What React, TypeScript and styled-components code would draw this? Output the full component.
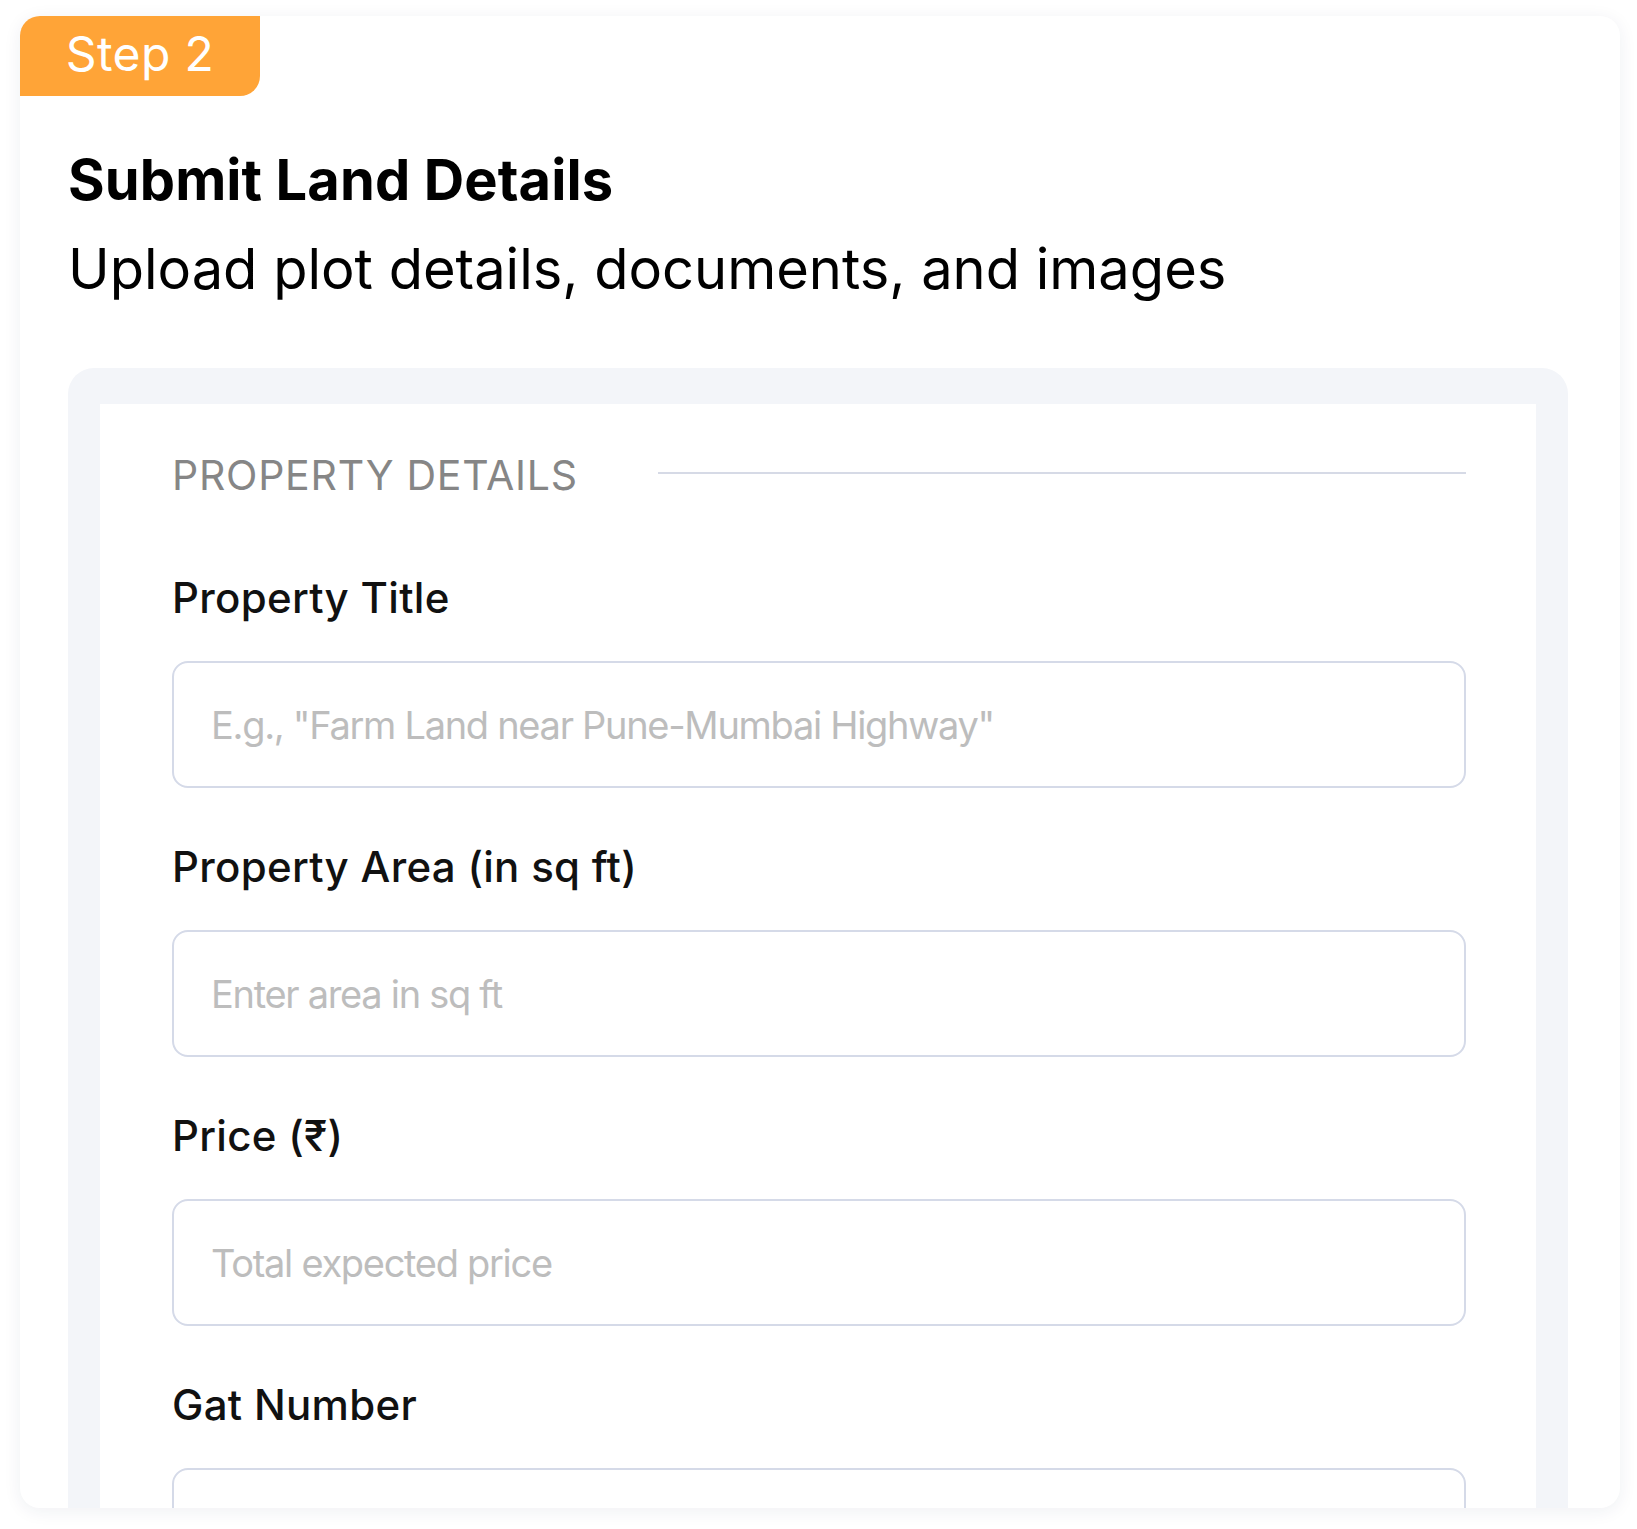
import React from "react";
import styled, { createGlobalStyle } from "styled-components";

const GlobalStyle = createGlobalStyle`
  * { box-sizing: border-box; }
  html, body { margin: 0; padding: 0; background: #ffffff; }
  body { font-family: Inter, "Noto Sans", "Liberation Sans", sans-serif; color: #111; }
`;

const Page = styled.div`
  padding: 16px 17px 21px 20px;
`;

const Card = styled.section`
  width: 1600px;
  height: 1492px;
  background: #ffffff;
  border-radius: 20px;
  box-shadow: 0 3px 18px rgba(30, 40, 80, 0.07);
  overflow: hidden;
  display: flex;
  flex-direction: column;
`;

const StepBadge = styled.div`
  width: 240px;
  height: 80px;
  padding-bottom: 5px;
  background: #ffa437;
  border-bottom-right-radius: 20px;
  color: #ffffff;
  font-size: 48px;
  font-weight: 400;
  letter-spacing: 0.4px;
  display: flex;
  align-items: center;
  justify-content: center;
  flex-shrink: 0;
`;

const Body = styled.div`
  padding: 0 52px 0 48px;
  display: flex;
  flex-direction: column;
`;

const Title = styled.h1`
  margin: 51px 0 0;
  font-size: 56px;
  line-height: 67px;
  font-weight: 700;
  letter-spacing: 0.1px;
  color: #000;
`;

const Subtitle = styled.p`
  margin: 22px 0 0;
  font-size: 56px;
  line-height: 67px;
  font-weight: 400;
  color: #000;
`;

const Panel = styled.div`
  margin-top: 65px;
  background: #f3f5f9;
  border-radius: 26px 26px 0 0;
  padding: 36px 32px 0;
`;

const Sheet = styled.div`
  background: #ffffff;
  padding: 46px 70px 40px 72px;
  display: flex;
  flex-direction: column;
`;

const SectionHeader = styled.div`
  display: flex;
  align-items: center;
  gap: 80px;
  margin-bottom: 73px;
`;

const SectionTitle = styled.h2`
  margin: 0;
  font-size: 41px;
  line-height: 50px;
  font-weight: 400;
  letter-spacing: 0.75px;
  color: #868686;
  text-transform: uppercase;
`;

const Rule = styled.div`
  flex: 1;
  height: 2px;
  margin-bottom: 4px;
  background: #d6dae6;
`;

const Field = styled.div`
  display: flex;
  flex-direction: column;
  & + & {
    margin-top: 54px;
  }
`;

const Label = styled.label`
  font-size: 42px;
  line-height: 50px;
  font-weight: 500;
  letter-spacing: 0.3px;
  color: #111;
  margin-bottom: 38px;
`;

const Input = styled.input`
  width: 100%;
  height: 127px;
  border: 2.5px solid #d5dae8;
  border-radius: 16px;
  padding: 0 37px;
  font-family: Inter, "Noto Sans", "Liberation Sans", sans-serif;
  font-size: 38px;
  letter-spacing: -1.3px;
  color: #333;
  background: #ffffff;
  outline: none;
  &::placeholder {
    color: #bdbdbd;
  }
`;

const fields = [
  { label: "Property Title", placeholder: 'E.g., "Farm Land near Pune-Mumbai Highway"' },
  { label: "Property Area (in sq ft)", placeholder: "Enter area in sq ft" },
  { label: "Price (₹)", placeholder: "Total expected price" },
  { label: "Gat Number", placeholder: "" },
];

export default function App() {
  return (
    <>
      <GlobalStyle />
      <Page>
        <Card>
          <StepBadge>Step 2</StepBadge>
          <Body>
            <Title>Submit Land Details</Title>
            <Subtitle>Upload plot details, documents, and images</Subtitle>
            <Panel>
              <Sheet>
                <SectionHeader>
                  <SectionTitle>Property Details</SectionTitle>
                  <Rule />
                </SectionHeader>
                {fields.map((f) => (
                  <Field key={f.label}>
                    <Label>{f.label}</Label>
                    <Input placeholder={f.placeholder} readOnly />
                  </Field>
                ))}
              </Sheet>
            </Panel>
          </Body>
        </Card>
      </Page>
    </>
  );
}
